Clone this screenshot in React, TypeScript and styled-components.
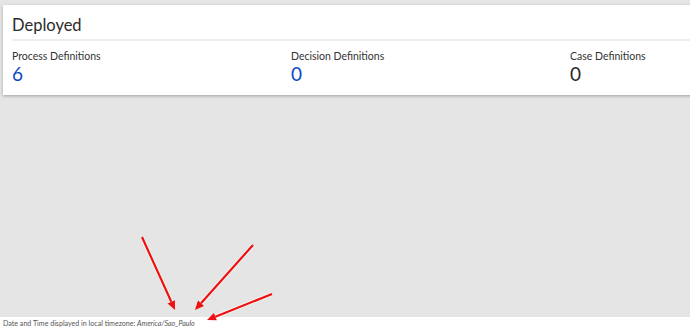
import styled, { createGlobalStyle } from "styled-components";

const GlobalStyle = createGlobalStyle`
  html, body {
    margin: 0;
    padding: 0;
    height: 100%;
    overflow: hidden;
  }
  body {
    background-color: #e5e5e5;
    font-family: Lato, "Noto Sans", sans-serif;
  }
  #root {
    height: 100%;
  }
`;

const Page = styled.div`
  position: relative;
  display: flex;
  flex-direction: column;
  height: 100vh;
  width: 100vw;
  overflow: hidden;
`;

const Main = styled.main`
  flex: 1;
  padding: 5px 0 0 3px;
`;

const Card = styled.section`
  width: 900px;
  background-color: #ffffff;
  box-shadow: 0 1px 3px rgba(0, 0, 0, 0.3);
  padding: 0 0 0 9px;
  box-sizing: border-box;
`;

const CardTitle = styled.h2`
  margin: 0;
  height: 36px;
  box-sizing: border-box;
  padding-top: 8px;
  font-size: 16.5px;
  line-height: 24px;
  font-weight: 400;
  color: #2b2b2b;
  border-bottom: 2px solid #eeeeee;
`;

const Stats = styled.div`
  display: grid;
  grid-template-columns: repeat(3, 279px);
  padding: 8px 0 10px;
`;

const Stat = styled.div`
  display: flex;
  flex-direction: column;
`;

const StatLabel = styled.span`
  font-size: 10.5px;
  line-height: 14px;
  color: #333333;
`;

const StatValue = styled.span<{ $link?: boolean }>`
  font-size: 19px;
  line-height: 22px;
  font-weight: 400;
  color: ${(p) => (p.$link ? "#0d47c8" : "#2a2a2a")};
`;

const Footer = styled.footer`
  height: 13px;
  background-color: #ffffff;
  padding-left: 3px;
  font-size: 7.1px;
  line-height: 14px;
  color: #555555;
  white-space: nowrap;
`;

const Zone = styled.em`
  font-style: italic;
`;

const Arrows = styled.svg`
  position: absolute;
  left: 0;
  top: 0;
  pointer-events: none;
`;

const arrows = [
  { x1: 142, y1: 237, x2: 175, y2: 310 },
  { x1: 253, y1: 245, x2: 195, y2: 310 },
  { x1: 272, y1: 294, x2: 207, y2: 320 },
];

const Arrow = ({ x1, y1, x2, y2 }: { x1: number; y1: number; x2: number; y2: number }) => {
  const a = Math.atan2(y2 - y1, x2 - x1);
  const len = 9;
  const w = 4;
  const bx = x2 - len * Math.cos(a);
  const by = y2 - len * Math.sin(a);
  const px = -Math.sin(a) * w;
  const py = Math.cos(a) * w;
  const head = `${x2},${y2} ${bx + px},${by + py} ${bx - px},${by - py}`;
  return (
    <g>
      <line x1={x1} y1={y1} x2={bx} y2={by} stroke="#ffffff" strokeWidth={4} strokeOpacity={0.6} />
      <line x1={x1} y1={y1} x2={bx} y2={by} stroke="#ee1111" strokeWidth={2.2} />
      <polygon points={head} fill="#ee1111" />
    </g>
  );
};

const stats = [
  { label: "Process Definitions", value: "6", link: true },
  { label: "Decision Definitions", value: "0", link: true },
  { label: "Case Definitions", value: "0", link: false },
];

export default function App() {
  return (
    <Page>
      <GlobalStyle />
      <Main>
        <Card>
          <CardTitle>Deployed</CardTitle>
          <Stats>
            {stats.map((s) => (
              <Stat key={s.label}>
                <StatLabel>{s.label}</StatLabel>
                <StatValue $link={s.link}>{s.value}</StatValue>
              </Stat>
            ))}
          </Stats>
        </Card>
      </Main>
      <Footer>
        Date and Time displayed in local timezone: <Zone>America/Sao_Paulo</Zone>
      </Footer>
      <Arrows width="690" height="330" viewBox="0 0 690 330">
        {arrows.map((a, i) => (
          <Arrow key={i} {...a} />
        ))}
      </Arrows>
    </Page>
  );
}
